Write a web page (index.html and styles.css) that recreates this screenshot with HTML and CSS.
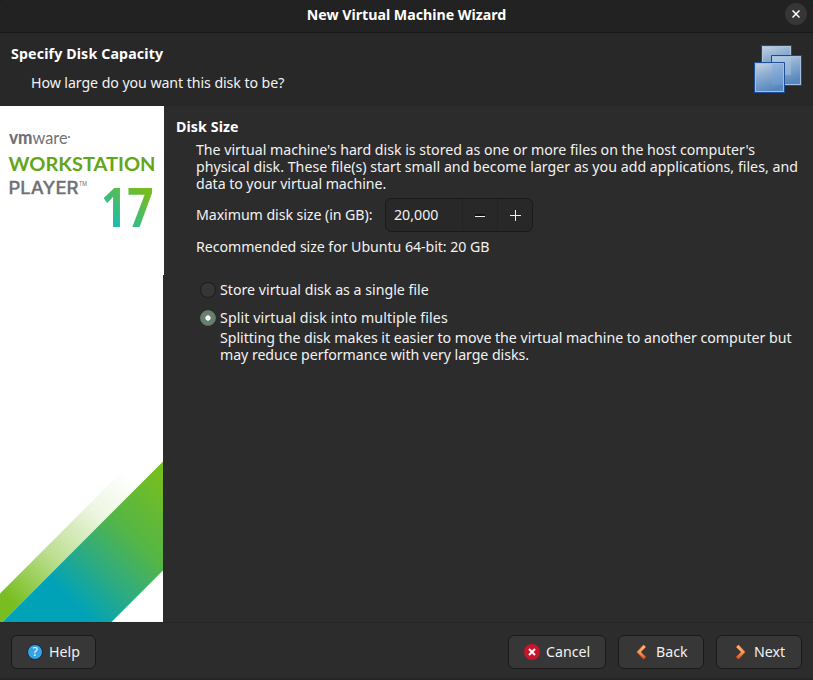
FILE: index.html
```html
<!DOCTYPE html>
<html lang="en">
<head>
<meta charset="utf-8">
<title>New Virtual Machine Wizard</title>
<link rel="stylesheet" href="styles.css">
</head>
<body>
<div class="window">
  <header class="titlebar">
    <span></span>
    <h1 class="title">New Virtual Machine Wizard</h1>
    <button class="close" aria-label="Close"><svg width="8" height="8" viewBox="0 0 8 8"><path d="M.5 .5 7.5 7.5M7.5 .5 .5 7.5" stroke="#fff" stroke-width="1.500" fill="none"/></svg></button>
  </header>
  <section class="banner">
    <div>
      <h2 class="l-specify">Specify Disk Capacity</h2>
      <p class="question l-how">How large do you want this disk to be?</p>
    </div>
    <svg class="squares" width="48" height="48" viewBox="0 0 48 48">
      <defs>
        <linearGradient id="glass" x1="0" y1="0" x2=".35" y2="1"><stop offset="0" stop-color="#c9d6e6"/><stop offset=".45" stop-color="#8fafd1"/><stop offset="1" stop-color="#5587bd"/></linearGradient>
      </defs>
      <g fill="url(#glass)">
        <path d="M7.5 .5h30v30h-30z" stroke="#1f4a8a"/><path d="M8.5 1.5h28v28h-28z" fill="none" stroke="#adc4df"/>
        <path d="M17.500 10.500h30v30h-30z" stroke="#1f4a8a"/><path d="M18.500 11.500h28v28h-28z" fill="none" stroke="#a4bfdf"/>
        <path d="M19 12h18v18H19z" fill="#a9c2dd" opacity=".5"/>
        <path d="M.5 17.500h30v30H.5z" stroke="#1f4f98"/><path d="M1.500 18.500h28v28h-28z" fill="none" stroke="#a0bfe4"/>
        <path d="M18 19h11v21H18z" fill="#77a5dc" opacity=".4"/>
      </g>
    </svg>
  </section>
  <main class="body">
    <aside class="side">
      <svg class="brand" width="164" height="169" viewBox="0 0 164 169">
        <defs><linearGradient id="num" gradientUnits="userSpaceOnUse" x1="108" y1="124" x2="142" y2="84"><stop offset="0" stop-color="#0bbdc9"/><stop offset="1" stop-color="#76bc21"/></linearGradient></defs>
        <path d="M0 0h164v169H0z" fill="#fff"/>
        <text class="vm" x="9" y="38" textLength="23.500" lengthAdjust="spacingAndGlyphs">vm</text>
        <text class="ware" x="32.500" y="38" textLength="35" lengthAdjust="spacingAndGlyphs">ware</text>
        <circle cx="69" cy="31" r="1" fill="#717074"/>
        <text class="work" x="8.500" y="64.500" textLength="147" lengthAdjust="spacingAndGlyphs">WORKSTATION</text>
        <text class="player" x="8.500" y="87.500" textLength="70" lengthAdjust="spacingAndGlyphs">PLAYER</text>
        <text class="tm" x="79" y="80" textLength="8" lengthAdjust="spacingAndGlyphs">TM</text>
        <text class="num" x="101" y="121" textLength="52.500" lengthAdjust="spacingAndGlyphs" fill="url(#num)">17</text>
      </svg>
      <svg class="stripes" width="163" height="347" viewBox="0 275 163 347">
        <defs>
          <linearGradient id="fade" gradientUnits="userSpaceOnUse" x1="14" y1="604" x2="132" y2="478"><stop offset="0" stop-color="#78be20"/><stop offset=".35" stop-color="#78be20" stop-opacity=".5"/><stop offset=".72" stop-color="#78be20" stop-opacity=".13"/><stop offset="1" stop-color="#78be20" stop-opacity="0"/></linearGradient>
          <linearGradient id="band" gradientUnits="userSpaceOnUse" x1="65" y1="595" x2="172" y2="488"><stop offset="0" stop-color="#00a2b8"/><stop offset=".25" stop-color="#28aa88"/><stop offset=".58" stop-color="#54b548"/><stop offset="1" stop-color="#75be20"/></linearGradient>
        </defs>
        <path d="M0 275h163v347H0z" fill="#fff"/>
        <path d="M0 593.500 133.500 460H163v1.500L2.500 622H0z" fill="url(#fade)"/>
        <path d="M2.500 622 163 461.500V570.500L111.500 622z" fill="url(#band)"/>
      </svg>
    </aside>
    <section class="content">
      <h2 class="l-disk">Disk Size</h2>
      <div class="indent">
        <p class="l-p1">The virtual machine's hard disk is stored as one or more files on the host computer's</p>
        <p class="l-p2">physical disk. These file(s) start small and become larger as you add applications, files, and</p>
        <p class="l-p3">data to your virtual machine.</p>
        <div class="field">
          <label class="l-max">Maximum disk size (in GB):</label>
          <div class="spin">
            <span class="value">20,000</span>
            <span class="step"><svg width="11" height="11"><path d="M0 5h10" stroke="#000"/><path d="M0 6.500h10" stroke="#eee" stroke-width="1"/></svg></span>
            <span class="step"><svg width="11" height="11"><path d="M0 5.500h11M5.500 0v11" stroke="#eee"/></svg></span>
          </div>
        </div>
        <p class="l-rec">Recommended size for Ubuntu 64-bit: 20 GB</p>
        <div class="option first"><span class="radio"></span><span class="l-store">Store virtual disk as a single file</span></div>
        <div class="option second"><span class="radio on"></span><span class="l-split">Split virtual disk into multiple files</span></div>
        <div class="note">
          <p class="l-n1">Splitting the disk makes it easier to move the virtual machine to another computer but</p>
          <p class="l-n2">may reduce performance with very large disks.</p>
        </div>
      </div>
    </section>
  </main>
  <footer class="footer">
    <button class="btn help"><svg width="16" height="16" viewBox="0 0 16 16"><circle cx="8" cy="8" r="7.500" fill="#35a2e6" stroke="#1b2a35"/><text class="q" x="8" y="12.200" text-anchor="middle">?</text></svg><span>Help</span></button>
    <div class="group">
      <button class="btn cancel"><svg width="16" height="16" viewBox="0 0 16 16"><circle cx="8" cy="8" r="8" fill="#c7162b"/><path d="M5 5l6 6M11 5l-6 6" stroke="#fff" stroke-width="1.900"/></svg><span>Cancel</span></button>
      <button class="btn back"><svg width="16" height="16" viewBox="0 0 16 16"><defs><linearGradient id="arrow" x1="0" y1="0" x2="0" y2="1"><stop offset="0" stop-color="#ffbd7c"/><stop offset=".5" stop-color="#f7a05a"/><stop offset="1" stop-color="#d9481c"/></linearGradient></defs><path d="M9.500 .8 12 3 7 8l5 5-2.500 2.300L2.700 8z" fill="url(#arrow)" stroke="#b8441c" stroke-width=".6"/></svg><span>Back</span></button>
      <button class="btn next"><svg width="16" height="16" viewBox="0 0 16 16"><path d="M6.500 .8 4 3l5 5-5 5 2.500 2.300L13.300 8z" fill="url(#arrow)" stroke="#b8441c" stroke-width=".6"/></svg><span>Next</span></button>
    </div>
  </footer>
</div>
</body>
</html>
```
FILE: styles.css
```css
* { box-sizing: border-box; }
body {
  margin: 0;
  background: #06202c;
  color: #f2f2f2;
  font: 14.2px/17px "Noto Sans", sans-serif;
  white-space: nowrap;
}
h1, h2, p { margin: 0; font-size: inherit; }
h2 { color: #fff; }
svg { display: block; flex: none; }
button { font: inherit; color: inherit; padding: 0; }
.window {
  width: 813px;
  height: 680px;
  display: flex;
  flex-direction: column;
  background: #2c2c2c;
  border-radius: 4px 4px 0 0;
  overflow: hidden;
}
.titlebar {
  height: 33px;
  display: grid;
  grid-template-columns: 1fr auto 1fr;
  padding: 0 6px 4px;
  align-items: center;
  background: #222;
  border-bottom: 1px solid #181818;
}
.title { color: #fff; font-weight: 700; }
.close {
  justify-self: end;
  width: 22px;
  height: 22px;
  border: 0;
  border-radius: 50%;
  background: #363636;
  display: grid;
  place-items: center;
}
.banner {
  height: 73px;
  display: flex;
  justify-content: space-between;
  padding: 12px 11px 0;
  background: #282828;
}
.question { margin: 12px 0 0 20px; }
.body { height: 516px; display: flex; }
.side { width: 164px; flex: none; }
.content { padding: 12px 0 0 12px; }
.indent { margin: 6px 0 0 20px; }
.field { display: flex; align-items: center; margin-top: 6px; height: 34px; }
.field label { width: 189px; padding-bottom: 1px; }
.spin {
  display: flex;
  width: 148px;
  height: 34px;
  border: 1px solid #1a1a1a;
  border-radius: 6px;
  background: #282828;
}
.value { width: 76px; padding: 7px 0 0 8px; }
.step { width: 35px; display: grid; place-items: center; border-left: 1px solid #222; }
.l-specify { letter-spacing: .14px; }
.l-disk { letter-spacing: .1px; }
.l-how { letter-spacing: -.075px; }
.l-p1 { letter-spacing: -.02px; }
.l-p2 { letter-spacing: .01px; }
.l-p3 { letter-spacing: -.06px; }
.l-max { letter-spacing: -.07px; }
.l-rec { margin-top: 6px; letter-spacing: -.065px; }
.l-split { letter-spacing: .09px; }
.l-n1 { letter-spacing: -.035px; }
.l-n2 { letter-spacing: -.06px; }
.option { display: flex; align-items: center; gap: 4px; height: 17px; margin-left: 4px; }
.first { margin-top: 26px; }
.second { margin-top: 11px; }
.radio {
  width: 16px;
  height: 16px;
  border-radius: 50%;
  border: 1px solid #1c1c1c;
  background: #363636;
}
.radio.on { border-color: #607568; background: radial-gradient(circle, #fff 0 2.300px, #667f6f 3px); }
.note { margin: 3px 0 0 24px; }
.footer {
  height: 58px;
  display: flex;
  justify-content: space-between;
  padding: 12px 11px 0;
  border-top: 1px solid #282828;
  border-bottom: 2px solid #252525;
}
.group { display: flex; gap: 12px; }
.btn {
  height: 34px;
  border: 1px solid #1a1a1a;
  border-radius: 6px;
  background: #373737;
  display: flex;
  align-items: center;
  gap: 6px;
  padding-left: 15px;
}
.btn span { padding-bottom: 2px; }
.help { width: 85px; }
.cancel { width: 98px; }
.back, .next { width: 86px; }
.q { font: 12px "Noto Sans", sans-serif; fill: #fff; }
.vm { font: 900 18px Lato, sans-serif; fill: #717074; }
.ware { font: 17.5px Lato, sans-serif; fill: #717074; }
.work { font: 700 18px Lato, sans-serif; fill: #64a51a; }
.player { font: 500 17px Inter, sans-serif; fill: #717074; stroke: #717074; stroke-width: .3px; }
.tm { font: 6px Inter, sans-serif; fill: #717074; }
.num { font: 700 53px "Open Sans", sans-serif; }
```
